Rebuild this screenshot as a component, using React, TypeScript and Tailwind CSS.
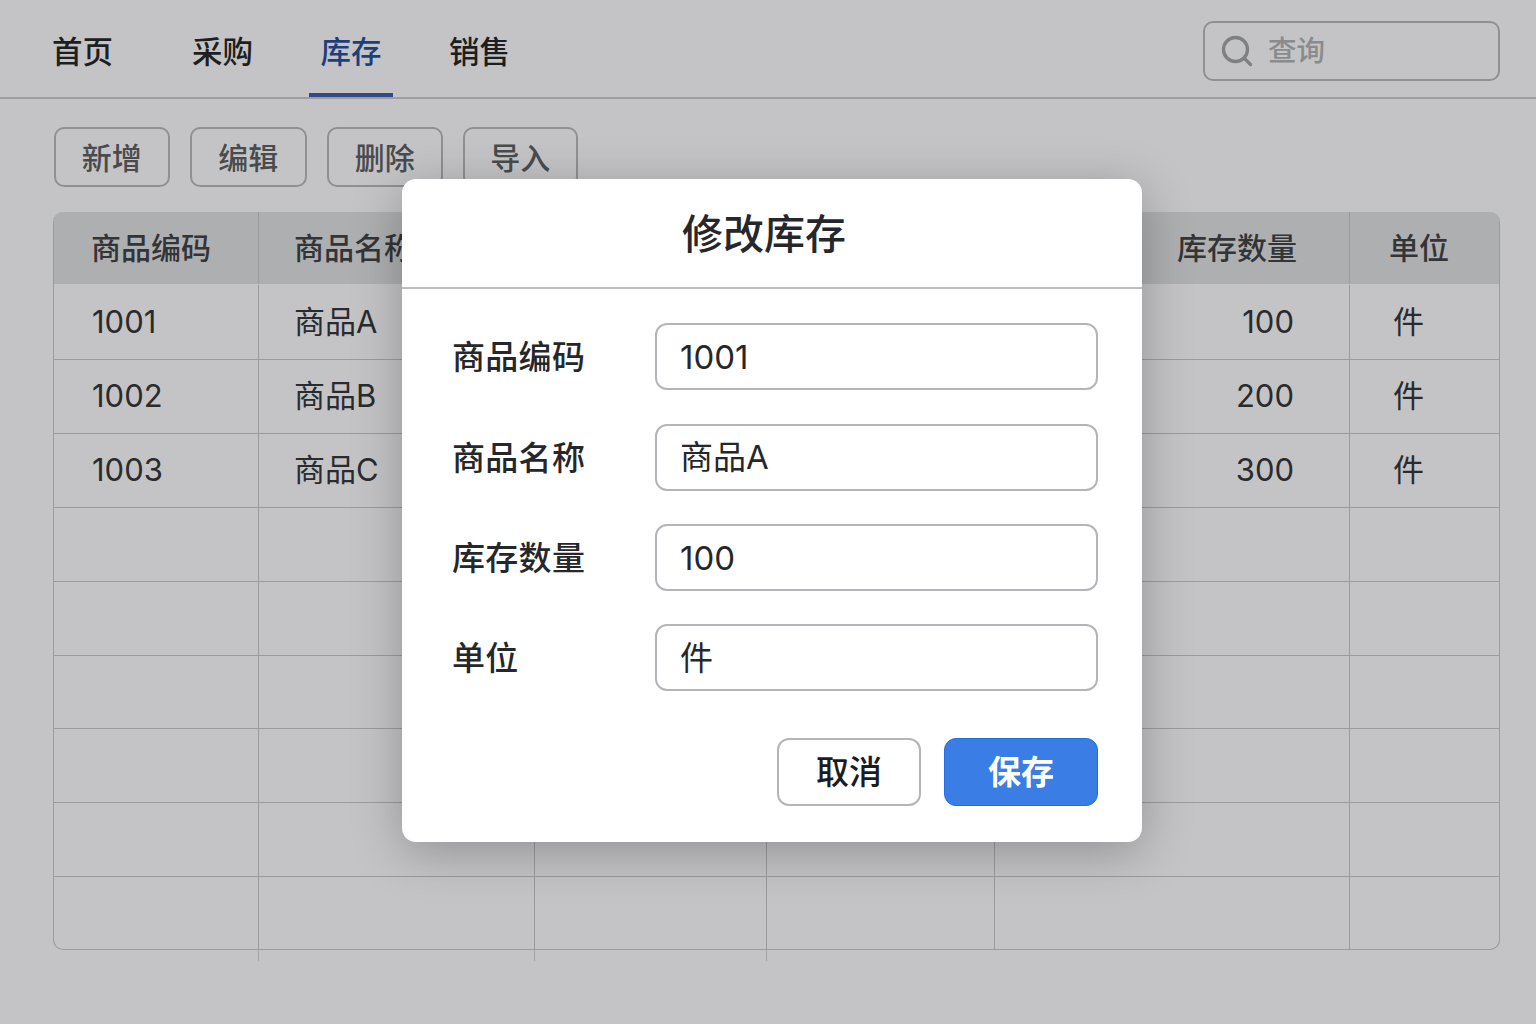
import { Search } from 'lucide-react'

const tools = [
  { label: '新增', width: 'w-[116.5px]' },
  { label: '编辑', width: 'w-[116.5px]' },
  { label: '删除', width: 'w-[116.5px]' },
  { label: '导入', width: 'w-[114.5px]' },
]

const rows = [
  ['1001', '商品A', '100', '件'],
  ['1002', '商品B', '200', '件'],
  ['1003', '商品C', '300', '件'],
  ['', '', '', ''],
  ['', '', '', ''],
  ['', '', '', ''],
  ['', '', '', ''],
  ['', '', '', ''],
  ['', '', '', ''],
]

const fields = [
  { label: '商品编码', value: '1001' },
  { label: '商品名称', value: '商品A' },
  { label: '库存数量', value: '100' },
  { label: '单位', value: '件' },
]

const gridCols = 'grid grid-cols-[205px_276px_232px_228px_355px_1fr]'
const cell = 'border-r border-[#9a9b9d] last:border-r-0'

export default function App() {
  return (
    <main className="relative h-[1024px] overflow-hidden bg-[#c4c4c6] font-['Inter','Noto_Sans_CJK_SC',sans-serif] font-medium text-[#26272a]">
      {/* Top nav */}
      <header className="flex h-[99px] items-start justify-between border-b-2 border-[#9d9ea0] pl-[41px] pr-[36px]">
        <nav className="flex h-[97px] text-[30.5px]">
          <a className="flex h-[97px] w-[140px] items-center pl-[11px] pt-[6px] text-[#1d1e21]">首页</a>
          <a className="flex h-[97px] w-[128px] items-center pl-[11px] pt-[6px] text-[#1d1e21]">采购</a>
          <a className="flex h-[97px] w-[84px] items-center justify-center border-b-[4px] border-[#2f4a85] pt-[10px] text-[#1c3f7c]">库存</a>
          <a className="ml-[56px] flex h-[97px] items-center pt-[6px] text-[#1d1e21]">销售</a>
        </nav>
        <div className="mt-[21px] flex h-[60px] w-[297px] items-center gap-[13px] rounded-[10px] border-2 border-[#8f9092] pl-[14px] text-[28.5px] text-[#8a8b8d]">
          <Search size={36} strokeWidth={2.2} className="text-[#7f8082]" />
          <span>查询</span>
        </div>
      </header>

      {/* Toolbar */}
      <div className="flex gap-[20px] pl-[53.5px] pt-[28px]">
        {tools.map((t) => (
          <button
            key={t.label}
            className={`h-[60px] ${t.width} rounded-[10px] border-2 border-[#8f9092] pt-[2px] text-[30px] text-[#4a4b4e]`}
          >
            {t.label}
          </button>
        ))}
      </div>

      {/* Inventory table */}
      <div className="ml-[53px] mt-[25px] w-[1447px] overflow-hidden rounded-[10px] border border-[#9a9b9d] border-t-0">
        <div className={`${gridCols} h-[72px] items-stretch bg-[#aeafb1] text-[30px] text-[#333437]`}>
          <div className={`${cell} flex items-center pl-[37px]`}>商品编码</div>
          <div className={`${cell} flex items-center pl-[35px]`}>商品名称</div>
          <div className={cell} />
          <div className={cell} />
          <div className={`${cell} flex items-center justify-end pr-[52px]`}>库存数量</div>
          <div className="flex items-center pl-[39px]">单位</div>
        </div>
        {rows.map((r, i) => (
          <div
            key={i}
            className={`${gridCols} ${i === 0 ? 'h-[76px] pt-[1px]' : 'h-[73.9px]'} border-b border-[#9a9b9d] text-[31px] font-normal text-[#2a2b2e] last:h-[72px] last:border-b-0`}
          >
            <div className={`${cell} flex items-center pl-[38px]`}>{r[0]}</div>
            <div className={`${cell} flex items-center pl-[35px]`}>{r[1]}</div>
            <div className={cell} />
            <div className={cell} />
            <div className={`${cell} flex items-center justify-end pr-[55px]`}>{r[2]}</div>
            <div className="flex items-center pl-[43px]">{r[3]}</div>
          </div>
        ))}
      </div>
      {/* column rules running past the table edge */}
      <div className={`${gridCols} ml-[54px] h-[11px] w-[1445px]`}>
        <div className="border-r border-[#a3a4a6]" />
        <div className="border-r border-[#a3a4a6]" />
        <div className="border-r border-[#a3a4a6]" />
      </div>

      {/* Edit dialog */}
      <div className="absolute left-[402px] top-[179px] h-[663px] w-[740px] rounded-[14px] bg-white shadow-[0_10px_50px_rgba(0,0,0,0.26)]">
        <div className="flex h-[110px] items-center justify-center border-b-2 border-[#bcbdbf] pr-[16px] pt-[4px] text-[41px] text-[#26272a]">
          修改库存
        </div>
        <div className="flex flex-col gap-[33.35px] pl-[50px] pr-[44px] pt-[34.2px]">
          {fields.map((f) => (
            <div key={f.label} className="flex h-[67px] items-center">
              <label className="w-[203px] pt-[3px] text-[33px] tracking-[0.3px] text-[#26272a]">{f.label}</label>
              <div className="flex h-[67px] flex-1 items-center rounded-[12px] border-2 border-[#b3b5b8] pl-[23px] pt-[2px] text-[33px] font-normal text-[#26272a]">
                {f.value}
              </div>
            </div>
          ))}
        </div>
        <div className="flex justify-end gap-[23px] pr-[44px] pt-[47px]">
          <button className="h-[68px] w-[144px] rounded-[12px] border-2 border-[#b3b5b8] bg-white pt-[2px] text-[33px] text-[#1b1c1f]">
            取消
          </button>
          <button className="h-[68px] w-[154px] rounded-[12px] border border-[#1f6fe0] bg-[#3a7de4] pt-[2px] text-[33px] font-bold text-white">
            保存
          </button>
        </div>
      </div>
    </main>
  )
}
